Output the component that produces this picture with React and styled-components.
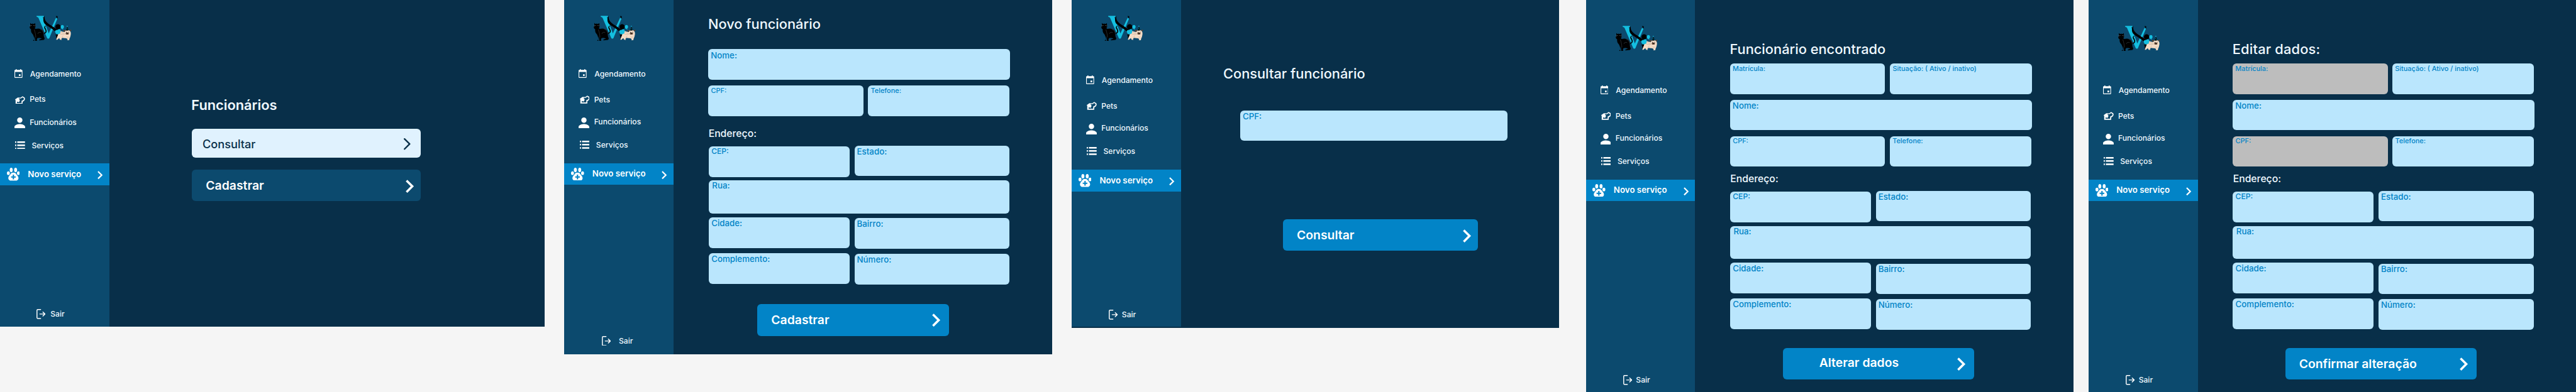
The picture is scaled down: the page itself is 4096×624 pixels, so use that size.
import React from 'react';
import styled, { createGlobalStyle } from 'styled-components';

const SCALE = 4096 / 6764;
const u = (n) => `${(n * SCALE).toFixed(3)}px`;

const color = {
  canvas: '#f5f5f5',
  navy: '#082f49',
  sidebar: '#0c4a6e',
  accent: '#0284c7',
  field: '#bae6fd',
  disabled: '#bdbdbd',
  pale: '#e0f2fe',
  text: '#f0f9ff',
};

const GlobalStyle = createGlobalStyle`
  *, *::before, *::after { box-sizing: border-box; }
  html, body { margin: 0; padding: 0; overflow: hidden; background: ${color.canvas}; }
  body { font-family: Inter, "Liberation Sans", sans-serif; line-height: 1; }
  svg { display: block; flex: none; }
`;

const Board = styled.div`
  display: flex;
  align-items: flex-start;
  width: 4096px;
  height: 624px;
  overflow: hidden;
  background: ${color.canvas};
`;

const Screen = styled.section`
  display: flex;
  align-items: flex-start;
  flex: none;
  width: ${(p) => u(p.$width)};
  height: ${(p) => u(p.$height)};
  margin-right: ${(p) => u(p.$gap)};
  background: ${color.navy};
`;

const SidebarPanel = styled.aside`
  display: flex;
  flex-direction: column;
  flex: none;
  width: ${u(287)};
  height: ${(p) => u(p.$height)};
  background: ${color.sidebar};
`;

const LogoArea = styled.div`
  height: ${(p) => u(p.$height)};
  padding: ${(p) => u(p.$top)} 0 0 ${u(76)};
`;

const MenuItem = styled.div`
  display: flex;
  align-items: flex-start;
  height: ${u(60)};
`;

const IconSlot = styled.span`
  display: flex;
  flex: none;
  width: ${(p) => u(p.$width)};
  padding: ${(p) => u(p.$top)} 0 0 ${(p) => u(p.$left)};
`;

const MenuLabel = styled.span`
  padding-top: ${(p) => u(p.$top)};
  font-size: ${u(20)};
  font-weight: 500;
  color: ${color.text};
  white-space: nowrap;
`;

const ActiveItem = styled.div`
  display: flex;
  align-items: center;
  height: ${u(57)};
  margin-top: ${u(10)};
  padding: 0 ${u(17)} 0 ${u(18)};
  background: ${color.accent};
`;

const ActiveLabel = styled.span`
  flex: 1;
  padding-left: ${u(21.3)};
  font-size: ${u(22)};
  font-weight: 600;
  color: #fff;
  white-space: nowrap;
`;

const ActiveChevron = styled.span`
  padding-top: ${u(5)};
  color: #fff;
`;

const Logout = styled.div`
  display: flex;
  align-items: center;
  gap: ${(p) => u(p.$gap)};
  margin-top: auto;
  padding: 0 0 ${(p) => u(p.$bottom)} ${(p) => u(p.$left)};
  font-size: ${u(20)};
  font-weight: 500;
  color: ${color.text};
`;

const Main = styled.main`
  display: flex;
  flex-direction: column;
  align-items: flex-start;
  flex: 1;
  padding: ${(p) => u(p.$top)} 0 0 ${(p) => u(p.$left)};
`;

const Title = styled.h1`
  margin: 0 0 ${(p) => u(p.$after)} ${(p) => u(p.$indent || 0)};
  font-size: ${u(36)};
  font-weight: ${(p) => p.$weight || 500};
  letter-spacing: ${(p) => u(p.$tracking || 0)};
  line-height: 1;
  color: ${color.text};
  white-space: nowrap;
`;

const SectionTitle = styled.h2`
  height: ${u(26)};
  margin: ${(p) => u(p.$before)} 0 ${(p) => u(p.$after)} ${u(0.6)};
  font-size: ${u(26)};
  font-weight: 500;
  line-height: 1;
  color: ${color.text};
`;

const FieldRow = styled.div`
  display: flex;
  align-items: flex-start;
  gap: ${(p) => u(p.$gap || 12.5)};
  margin-bottom: ${(p) => u(p.$after || 0)};
  margin-left: ${(p) => u(p.$indent || 0)};
`;

const AddressBlock = styled.div`
  display: flex;
  flex-direction: column;
  margin-left: ${(p) => u(p.$indent || 0)};
`;

const FieldBox = styled.label`
  display: block;
  flex: none;
  width: ${(p) => u(p.$width)};
  height: ${(p) => u(p.$height || 80)};
  margin-top: ${(p) => u(p.$drop || 0)};
  padding: ${(p) => u(p.$padTop)} 0 0 ${(p) => u(p.$padLeft)};
  border-radius: ${u(10)};
  background: ${(p) => (p.$disabled ? color.disabled : color.field)};
  font-size: ${(p) => u(p.$size)};
  font-weight: 500;
  color: ${color.accent};
  white-space: nowrap;
`;

const Button = styled.button`
  display: flex;
  align-items: center;
  justify-content: space-between;
  width: ${(p) => u(p.$width)};
  height: ${(p) => u(p.$height || 83)};
  margin: ${(p) => u(p.$before || 0)} 0 0 ${(p) => u(p.$indent || 0)};
  padding: 0 ${(p) => u(p.$right)} 0 ${(p) => u(p.$left)};
  border: 0;
  border-radius: ${u(10)};
  background: ${(p) => p.$bg || color.accent};
  font-family: inherit;
  font-size: ${(p) => u(p.$size || 32)};
  font-weight: ${(p) => p.$weight || 600};
  line-height: 1;
  color: ${(p) => p.$fg || '#fff'};
  white-space: nowrap;
`;

const ButtonText = styled.span`
  padding-top: ${(p) => u(p.$nudge || 0)};
  padding-bottom: ${(p) => u(p.$lift || 0)};
`;

const ButtonIcon = styled.span`
  padding-top: ${(p) => u(p.$nudge || 0)};
`;

const size = (w, h) => ({ width: w * SCALE, height: h * SCALE });

const Chevron = ({ w = 22, h = 35 }) => (
  <svg {...size(w, h)} viewBox="0 0 22 35" fill="none" stroke="currentColor" strokeWidth="5.8">
    <path d="M2.4 2.4 17.5 17.5 2.4 32.6" />
  </svg>
);

const ThinChevron = () => (
  <svg {...size(17.5, 30.5)} viewBox="0 0 17.5 30.5" fill="none" stroke="currentColor" strokeWidth="4" strokeLinecap="round" strokeLinejoin="round">
    <path d="M2 2 15.4 15.25 2 28.5" />
  </svg>
);

const CalendarIcon = () => (
  <svg {...size(21, 23)} viewBox="0 0 21 23" fill="#fff">
    <path fillRule="evenodd" d="M3.6 0h2.2v2h9.3V0h2.2v2H19a2 2 0 0 1 2 2v17a2 2 0 0 1-2 2H2a2 2 0 0 1-2-2V4a2 2 0 0 1 2-2h1.6zM1.8 7.3V21.2H19.2V7.3z" />
    <rect x="11.6" y="13.6" width="4.4" height="4.4" />
  </svg>
);

const DogIcon = () => (
  <svg {...size(26, 21)} viewBox="0 0 26 21" fill="#fff">
    <path fillRule="evenodd" d="M0 8.6 7 3.8 14.3 4 19.5.3 25 3.600C26 5.500 26.200 7.500 25.500 9.300L23.600 12.600 19.800 14.800 19.600 21H1.300V11.200zM5 14.300V18.300H17V12.600L21.600 10.300 23.300 7.800 22.600 5.300 19.600 3.100 15.200 6.100 9.500 6.300 12.600 10.500 11 15.300 8.500 15.800z" />
  </svg>
);

const PersonIcon = () => (
  <svg {...size(28, 28)} viewBox="4 4 16 16" fill="#fff">
    <path d="M12 12c2.21 0 4-1.790 4-4s-1.790-4-4-4-4 1.790-4 4 1.790 4 4 4zm0 2c-2.670 0-8 1.340-8 4v2h16v-2c0-2.660-5.330-4-8-4z" />
  </svg>
);

const ListIcon = () => (
  <svg {...size(26, 21)} viewBox="0 0 26 21" fill="#fff">
    <path d="M0 0h3v4H0zM5.700 0H26v4H5.700zM0 8.400h3v4.200H0zM5.700 8.400H26v4.200H5.700zM0 16.900h3V21H0zM5.700 16.900H26V21H5.700z" />
  </svg>
);

const PawIcon = () => (
  <svg {...size(34, 34)} viewBox="0 0 34 34" fill="#fff">
    <ellipse cx="3.8" cy="14.3" rx="3.8" ry="4.7" />
    <ellipse cx="11.3" cy="5.9" rx="3.9" ry="5.9" />
    <ellipse cx="22.8" cy="5.9" rx="3.9" ry="5.9" />
    <ellipse cx="30.2" cy="14.3" rx="3.8" ry="4.7" />
    <path fillRule="evenodd" d="M17 12.600c4.200 0 6.700 1.900 8.100 5.200 1 2.400 5.300 4.600 5.300 9.300 0 4.500-3.500 6.900-7.400 6.900H11c-3.900 0-7.400-2.400-7.400-6.900 0-4.700 4.300-6.900 5.300-9.300 1.400-3.300 3.900-5.200 8.100-5.200zM15.300 18.200v4.400H10.900v3.400h4.400v4.400h3.400V26h4.400v-3.400h-4.400v-4.400z" />
  </svg>
);

const LogoutIcon = () => (
  <svg {...size(24, 26)} viewBox="0 0 24 26" fill="none" stroke="#fff" strokeWidth="2.4" strokeLinecap="round" strokeLinejoin="round">
    <path d="M11 1.300H3.200A2 2 0 0 0 1.300 3.200v19.600a2 2 0 0 0 1.900 1.900H11M8.800 13H22.300M17 7.900l5.300 5.100L17 18.100" />
  </svg>
);

const Logo = () => (
  <svg {...size(112, 68)} viewBox="48 60 336 204">
    <path fill="#14bfe0" d="M108 66H166V73L157 77 204 205 260 84 273 86 210 238C207 248 194 248 190 238L122 80 108 73z" />
    <path fill="#000" d="M172 68c-14 14-14 44 0 60 18 18 56 34 88 66l12-16c-24-24-62-40-82-60-16-14-20-28-18-50zM260 68l14 1-1 22-7-12z" />
    <path fill="#000" d="M257 214l22-4c-2 14-6 26-18 38 4-12 2-22-4-34z" />
    <path fill="#000" d="M58 122l9 8c6-2 14-2 20 0l10-7 2 14c5 9 1 21-6 26l8 6c22-6 44-2 54 10 6 7 8 14 10 22 8-2 14-6 14-14 0-12-12-18-11-30 1-8 8-14 14-12-6 4-8 8-6 13 4 9 14 20 11 34-3 10-12 16-22 16-2 10 0 18 2 26 6 6 6 16-2 22l-34 4c-6-4 2-10 10-10l8-4c-6-4-12-4-20-6-8 1-14 2-16 4-2 8-4 12-2 16 4 4 6 8 2 10l-20-1c-4-4 2-7 5-10-2-12-3-24-6-32l-3 26 1 12H82c-2-6 2-8 6-10 2-18-2-30-10-44-9-10-16-20-13-38-12-8-14-20-7-30z" />
    <path fill="none" stroke="#8fa3ad" strokeWidth="1.300" d="M52 140l12 3M53 149l11-3M103 139l-12 4M104 148l-12-2M90 174c6 22 12 40 12 62M118 208c2-12 14-16 26-10M136 172c16 4 28 18 28 36" />
    <path fill="#d8dde0" d="M66 139l6 1-5 3zM83 140l6-1-2 4z" />
    <circle cx="277" cy="153" r="21" fill="#000" />
    <path fill="#14bfe0" d="M298 153c0-9 6-15 13-15s13 6 13 15c0 7-4 12-8 14l3 10-9-8c-7-1-12-7-12-16z" />
    <path fill="#f5dcc6" d="M284 182c14 2 24 12 46 12l4-10c8-6 28-6 36 0 10 8 10 24 6 38-2 10-4 16-8 22l-3 14h-16l4-9c-8-5-14-7-22-7l-20-2-8 8 4 8-14-2-6-12c-6 2-10 6-14 12h-10c2-10 8-22 12-30z" />
    <path fill="none" stroke="#8c7464" strokeWidth="1.500" d="M292 188c10 10 24 16 36 18M290 206c14 8 30 8 46 2M306 238l12-16M344 232c6 4 12 4 18 0" />
    <path fill="#14bfe0" d="M254 190c0-10 10-16 20-11 3-8 18-10 22-1 4 8-2 16-1 24-8 8-20 11-30 9-2-5-11-11-11-21z" />
    <path fill="#59402f" d="M318 182c6-5 14-5 20-1l-10 12c-6-2-10-6-10-11zM368 180c6-6 12-6 15-1-1 5-5 8-10 9z" />
    <ellipse cx="350" cy="206" rx="13" ry="8" fill="#59402f" />
    <path fill="#1a1210" d="M340 193h6v4h-6zM358 192h6v4h-6zM346 199h9v5h-9z" />
    <path fill="#000" d="M349 149l13 30c-7 4-16 4-23 2z" />
    <path fill="#14bfe0" d="M345 145h8v7h-8zM345 162h5v5h-5zM353 170h5v5h-5zM342 175h4v4h-4z" />
  </svg>
);

function Sidebar({ height, logoTop = 40, shift = 0, petsDrop = 0, exit }) {
  return (
    <SidebarPanel $height={height}>
      <LogoArea $top={logoTop} $height={180 + shift}>
        <Logo />
      </LogoArea>
      <MenuItem>
        <IconSlot $width={79} $left={38} $top={2}><CalendarIcon /></IconSlot>
        <MenuLabel $top={5.7}>Agendamento</MenuLabel>
      </MenuItem>
      <MenuItem>
        <IconSlot $width={78} $left={40} $top={12}><DogIcon /></IconSlot>
        <MenuLabel $top={10.4 + petsDrop}>Pets</MenuLabel>
      </MenuItem>
      <MenuItem>
        <IconSlot $width={78} $left={38} $top={9.3}><PersonIcon /></IconSlot>
        <MenuLabel $top={11.7}>Funcionários</MenuLabel>
      </MenuItem>
      <MenuItem>
        <IconSlot $width={83.3} $left={40} $top={11}><ListIcon /></IconSlot>
        <MenuLabel $top={12.7}>Serviços</MenuLabel>
      </MenuItem>
      <ActiveItem>
        <PawIcon />
        <ActiveLabel>Novo serviço</ActiveLabel>
        <ActiveChevron><Chevron w={14} h={22} /></ActiveChevron>
      </ActiveItem>
      <Logout $left={exit.left} $gap={exit.gap} $bottom={exit.bottom}>
        <LogoutIcon />
        Sair
      </Logout>
    </SidebarPanel>
  );
}

function Field({ label, width, height, drop, size: fontSize = 22, top = 4.7, left = 7, disabled }) {
  return (
    <FieldBox $width={width} $height={height} $drop={drop} $size={fontSize} $padTop={top} $padLeft={left} $disabled={disabled}>
      {label}
    </FieldBox>
  );
}

function AddressFields({ indent }) {
  return (
    <AddressBlock $indent={indent}>
      <FieldRow $after={9.5}>
        <Field label="CEP:" width={370} drop={2.6} size={20} top={3} />
        <Field label="Estado:" width={407.5} top={5.7} left={6.7} />
      </FieldRow>
      <FieldRow $after={11}>
        <Field label="Rua:" width={790} height={86} top={3.4} left={9} />
      </FieldRow>
      <FieldRow $after={12}>
        <Field label="Cidade:" width={370} />
        <Field label="Bairro:" width={407.5} drop={2} left={6.7} />
      </FieldRow>
      <FieldRow>
        <Field label="Complemento:" width={370} />
        <Field label="Número:" width={407.5} drop={2} left={6.7} />
      </FieldRow>
    </AddressBlock>
  );
}

function EmployeeRecord({ title, tracking, locked, statusGap, children }) {
  return (
    <Main $top={111.6} $left={92}>
      <Title $after={19.4} $tracking={tracking} $indent={-0.9}>{title}</Title>
      <FieldRow $gap={statusGap} $after={15}>
        <Field label="Matrícula:" width={407} size={18} top={4.2} left={6.6} disabled={locked} />
        <Field label="Situação: ( Ativo / inativo)" width={372} size={18} top={4.2} left={7} />
      </FieldRow>
      <FieldRow $after={16}>
        <Field label="Nome:" width={792} top={5.7} left={6.4} />
      </FieldRow>
      <FieldRow $gap={12}>
        <Field label="CPF:" width={407} size={18} top={4.5} disabled={locked} />
        <Field label="Telefone:" width={372} size={18} top={4.5} left={7.4} />
      </FieldRow>
      <SectionTitle $before={20.2} $after={17.7}>Endereço:</SectionTitle>
      <AddressFields />
      {children}
    </Main>
  );
}

export default function App() {
  return (
    <>
      <GlobalStyle />
      <Board>
        <Screen $width={1430} $height={859} $gap={52}>
          <Sidebar height={859} exit={{ left: 95, gap: 13.5, bottom: 20.5 }} />
          <Main $top={259} $left={217}>
            <Title $weight={600} $indent={-1.4} $after={43.5}>Funcionários</Title>
            <Button $width={601} $height={76} $left={27.8} $right={27} $bg={color.pale} $fg={color.navy} $size={30} $weight={500}>
              <ButtonText $nudge={3.4}>Consultar</ButtonText>
              <ButtonIcon $nudge={4.5}><ThinChevron /></ButtonIcon>
            </Button>
            <Button $before={31} $width={601} $left={36.6} $right={17.3} $bg={color.sidebar}>
              <ButtonText $nudge={1.5}>Cadastrar</ButtonText>
              <ButtonIcon $nudge={6}><Chevron /></ButtonIcon>
            </Button>
          </Main>
        </Screen>

        <Screen $width={1280} $height={931} $gap={52}>
          <Sidebar height={931} shift={-1} petsDrop={3} exit={{ left: 98.2, gap: 20.8, bottom: 22 }} />
          <Main $top={46} $left={91}>
            <Title $indent={-0.6} $after={47}>Novo funcionário</Title>
            <FieldRow $after={16}>
              <Field label="Nome:" width={792} top={5.9} left={6.4} />
            </FieldRow>
            <FieldRow $gap={12}>
              <Field label="CPF:" width={407} size={18} top={4.7} />
              <Field label="Telefone:" width={372} size={18} top={4.7} left={7.4} />
            </FieldRow>
            <SectionTitle $before={33.5} $after={18.2}>Endereço:</SectionTitle>
            <AddressFields indent={1} />
            <Button $before={52.2} $indent={129} $width={503} $left={36.2} $right={23}>
              <ButtonText $nudge={2}>Cadastrar</ButtonText>
              <ButtonIcon $nudge={2}><Chevron /></ButtonIcon>
            </Button>
          </Main>
        </Screen>

        <Screen $width={1280} $height={862} $gap={70}>
          <Sidebar height={859} shift={16} petsDrop={3} exit={{ left: 98.2, gap: 9.7, bottom: 18.5 }} />
          <Main $top={177.3} $left={111}>
            <Title $after={76.7}>Consultar funcionário</Title>
            <FieldRow $indent={44}>
              <Field label="CPF:" width={703} top={5.3} />
            </FieldRow>
            <Button $before={206} $indent={157} $width={511} $left={36.3} $right={16.5}>
              <ButtonText $nudge={1.6}>Consultar</ButtonText>
              <ButtonIcon $nudge={6}><Chevron /></ButtonIcon>
            </Button>
          </Main>
        </Screen>

        <Screen $width={1280} $height={1031} $gap={40}>
          <Sidebar height={1031} logoTop={66} shift={42} petsDrop={3} exit={{ left: 98.2, gap: 9.7, bottom: 19.5 }} />
          <EmployeeRecord title="Funcionário encontrado" statusGap={13}>
            <Button $before={48} $indent={138} $width={503} $left={96} $right={23}>
              <ButtonText $lift={3.6}>Alterar dados</ButtonText>
              <ButtonIcon $nudge={2}><Chevron /></ButtonIcon>
            </Button>
          </EmployeeRecord>
        </Screen>

        <Screen $width={1280} $height={1031} $gap={0}>
          <Sidebar height={1031} logoTop={66} shift={42} petsDrop={3} exit={{ left: 98.2, gap: 9.7, bottom: 19.5 }} />
          <EmployeeRecord title="Editar dados:" tracking={0.3} locked statusGap={12}>
            <Button $before={48} $indent={138} $width={503} $left={36} $right={23}>
              <ButtonText $nudge={0.5}>Confirmar alteração</ButtonText>
              <ButtonIcon $nudge={2}><Chevron /></ButtonIcon>
            </Button>
          </EmployeeRecord>
        </Screen>
      </Board>
    </>
  );
}
